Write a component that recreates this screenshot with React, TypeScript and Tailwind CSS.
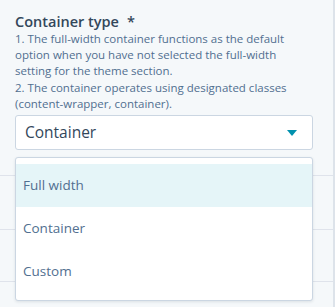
import React from "react";

export default function App() {
  return (
    <div className="relative w-[335px] h-[307px] overflow-hidden bg-[#f5f8fa] border-r-2 border-[#dde3ea]" style={{ fontFamily: '"Open Sans", sans-serif' }}>
      <div className="pl-[15px] pr-[21px] pt-[13px]">
        <div className="flex items-center text-[14.5px] leading-[18px] font-semibold text-[#33475b]">
          <span>Container type</span>
          <span className="ml-[8px]">*</span>
        </div>
        <div className="mt-0 text-[11.5px] leading-[16.2px] font-medium text-[#516f90]">
          <div>1. The full-width container functions as the default option when you have not selected the full-width setting for the theme section.</div>
          <div>2. The container operates using designated classes (content-wrapper, container).</div>
        </div>
        <div className="mt-[3px] h-[35px] w-[298px] rounded-[3px] border border-[#cbd6e2] bg-white flex items-center justify-between pl-[9px] pr-[15px]">
          <span className="text-[15.5px] text-[#33475b]">Container</span>
          <svg width="10" height="6" viewBox="0 0 10 6"><path d="M0 0 L10 0 L5 6 Z" fill="#0091ae" /></svg>
        </div>
      </div>
      <div className="mt-[25px] border-b border-[#dfe3eb]" />
      <div className="h-[54px] border-b border-[#dfe3eb]" />
      <div className="h-[52px] border-b border-[#dfe3eb]" />

      <div className="absolute left-[15px] top-[157px] w-[298px] h-[144px] bg-white border border-[#cbd6e2] rounded-[3px] shadow-[0_1px_3px_rgba(45,62,80,0.12)] pt-[6px]">
        <div className="h-[43px] bg-[#e5f5f8] flex items-center pl-[7px] text-[13.5px] text-[#516f90]">Full width</div>
        <div className="h-[43px] flex items-center pl-[7px] text-[13.5px] text-[#516f90]">Container</div>
        <div className="h-[43px] flex items-center pl-[7px] text-[13.5px] text-[#516f90]">Custom</div>
      </div>
    </div>
  );
}
